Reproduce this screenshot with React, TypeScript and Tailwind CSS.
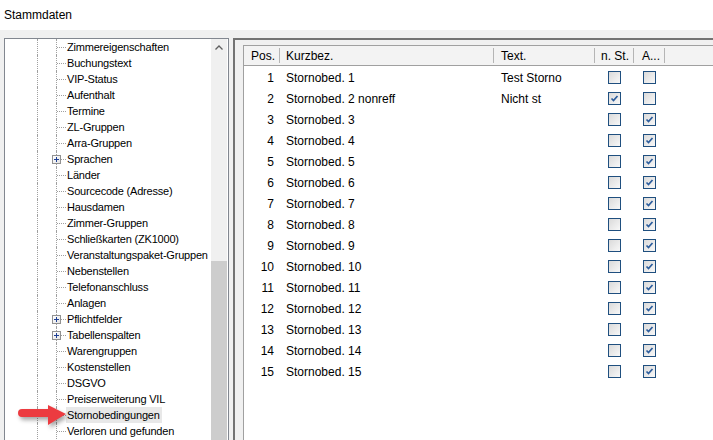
import React from 'react'

type TreeItem = { label: string; plus?: boolean; selected?: boolean }

const treeItems: TreeItem[] = [
  { label: 'Zimmereigenschaften' },
  { label: 'Buchungstext' },
  { label: 'VIP-Status' },
  { label: 'Aufenthalt' },
  { label: 'Termine' },
  { label: 'ZL-Gruppen' },
  { label: 'Arra-Gruppen' },
  { label: 'Sprachen', plus: true },
  { label: 'Länder' },
  { label: 'Sourcecode (Adresse)' },
  { label: 'Hausdamen' },
  { label: 'Zimmer-Gruppen' },
  { label: 'Schließkarten (ZK1000)' },
  { label: 'Veranstaltungspaket-Gruppen' },
  { label: 'Nebenstellen' },
  { label: 'Telefonanschluss' },
  { label: 'Anlagen' },
  { label: 'Pflichtfelder', plus: true },
  { label: 'Tabellenspalten', plus: true },
  { label: 'Warengruppen' },
  { label: 'Kostenstellen' },
  { label: 'DSGVO' },
  { label: 'Preiserweiterung VIL' },
  { label: 'Stornobedingungen', selected: true },
  { label: 'Verloren und gefunden' },
]

type Row = { pos: number; name: string; text: string; nSt: boolean; a: boolean }

const rows: Row[] = Array.from({ length: 15 }, (_, i) => {
  const pos = i + 1
  if (pos === 1) return { pos, name: 'Stornobed. 1', text: 'Test Storno', nSt: false, a: false }
  if (pos === 2) return { pos, name: 'Stornobed. 2 nonreff', text: 'Nicht st', nSt: true, a: false }
  return { pos, name: `Stornobed. ${pos}`, text: '', nSt: false, a: true }
})

function PlusBox() {
  return (
    <div className="absolute left-[-5px] top-[4px] flex h-[9px] w-[9px] items-center justify-center border border-[#919191] bg-gradient-to-br from-white to-[#e4e4e4]">
      <svg width="7" height="7" viewBox="0 0 7 7">
        <path d="M1 3.5H6M3.5 1V6" stroke="#1e3f94" strokeWidth="1" />
      </svg>
    </div>
  )
}

function TreeRow({ item }: { item: TreeItem }) {
  return (
    <div className="flex h-[16px] items-stretch">
      <div className="w-[32px] shrink-0" />
      <div className="w-[19px] shrink-0 border-l border-dotted border-[#a0a0a0]" />
      <div className="relative flex w-[10px] shrink-0 items-center border-l border-dotted border-[#a0a0a0]">
        <div className={`w-full border-t border-dotted border-[#a0a0a0] ${item.plus ? 'ml-[4px]' : ''}`} />
        {item.plus && <PlusBox />}
      </div>
      <span
        className={`whitespace-nowrap pl-[1px] pr-[2px] pt-[1px] text-[11px] leading-[15px] tracking-[-0.2px] text-black ${
          item.selected ? 'bg-[#e8e8e8]' : ''
        }`}
      >
        {item.label}
      </span>
    </div>
  )
}

function CheckBox({ checked }: { checked: boolean }) {
  return (
    <div className="flex h-[13px] w-[13px] items-center justify-center border border-[#1f4f7f] bg-gradient-to-br from-[#dadada] to-[#f8f8f8]">
      {checked && (
        <svg width="9" height="9" viewBox="0 0 9 9">
          <path d="M1.5 4.5L3.5 6.5L7.5 2" fill="none" stroke="#2b5c9c" strokeWidth="1.7" />
        </svg>
      )}
    </div>
  )
}

function HeaderCell({ w, children, className }: { w: string; children?: React.ReactNode; className?: string }) {
  return (
    <div className={`flex shrink-0 items-center ${w}`}>
      <div className={`flex-1 whitespace-nowrap ${className ?? ''}`}>{children}</div>
      <div className="h-[15px] w-px bg-[#b5b5b5]" />
    </div>
  )
}

export default function App() {
  return (
    <div className="relative h-[440px] w-[713px] overflow-hidden bg-[#f0f0f0] font-['Liberation_Sans',Arial,sans-serif] text-black">
      {/* ── TITEL ── */}
      <div className="h-[30px] bg-white pl-[4px] text-[12px] leading-[30px]">Stammdaten</div>

      {/* ── INHALT ── */}
      <div className="flex pl-[4px] pt-[8px]">
        {/* Baum */}
        <div className="flex h-[420px] w-[225px] shrink-0 border border-[#828790] bg-white">
          <div className="w-[206px] shrink-0 overflow-hidden">
            {treeItems.map(item => (
              <TreeRow key={item.label} item={item} />
            ))}
          </div>
          <div className="flex w-[16px] shrink-0 flex-col bg-[#f0f0f0]">
            <div className="flex h-[17px] items-center justify-center">
              <svg width="8" height="5" viewBox="0 0 8 5">
                <path d="M0.5 4.5L4 1L7.5 4.5" fill="none" stroke="#606060" strokeWidth="1.3" />
              </svg>
            </div>
            <div className="h-[205px]" />
            <div className="flex-1 bg-[#cdcdcd]" />
          </div>
          <div className="w-px shrink-0 bg-white" />
        </div>

        {/* Liste */}
        <div className="ml-[4px] h-[420px] flex-1 border-l-2 border-t-2 border-[#737373] pl-[8px] pt-[5px]">
          <div className="h-full border-l border-t border-[#a0a0a0] bg-white text-[12px]">
            <div className="flex h-[20px] border-b border-[#a0a0a0] bg-[#f3f3f3]">
              <HeaderCell w="w-[36px]" className="pr-[4px] text-right">Pos.</HeaderCell>
              <HeaderCell w="w-[214px]" className="pl-[6px]">Kurzbez.</HeaderCell>
              <HeaderCell w="w-[101px]" className="pl-[7px]">Text.</HeaderCell>
              <HeaderCell w="w-[39px]" className="pl-[6px]">n. St.</HeaderCell>
              <HeaderCell w="w-[31px]" className="pl-[8px]">A...</HeaderCell>
            </div>
            <div className="pt-[1px]">
              {rows.map(r => (
                <div key={r.pos} className="flex h-[21px] items-center">
                  <div className="w-[36px] shrink-0 pr-[6px] text-right">{r.pos}</div>
                  <div className="w-[214px] shrink-0 pl-[6px]">{r.name}</div>
                  <div className="w-[101px] shrink-0 pl-[7px]">{r.text}</div>
                  <div className="flex w-[39px] shrink-0 justify-center pr-px">
                    <CheckBox checked={r.nSt} />
                  </div>
                  <div className="flex w-[31px] shrink-0 justify-center pr-px">
                    <CheckBox checked={r.a} />
                  </div>
                </div>
              ))}
            </div>
          </div>
        </div>
      </div>

      {/* ── PFEIL ── */}
      <svg
        className="absolute left-[10px] top-[398px] drop-shadow-[2px_3px_2px_rgba(0,0,0,0.35)]"
        width="60"
        height="32"
        viewBox="0 0 60 32"
      >
        <path d="M12 11H38V7L56 16L38 27V19H12A4 4 0 0 1 12 11Z" fill="#ec3b40" />
      </svg>
    </div>
  )
}
